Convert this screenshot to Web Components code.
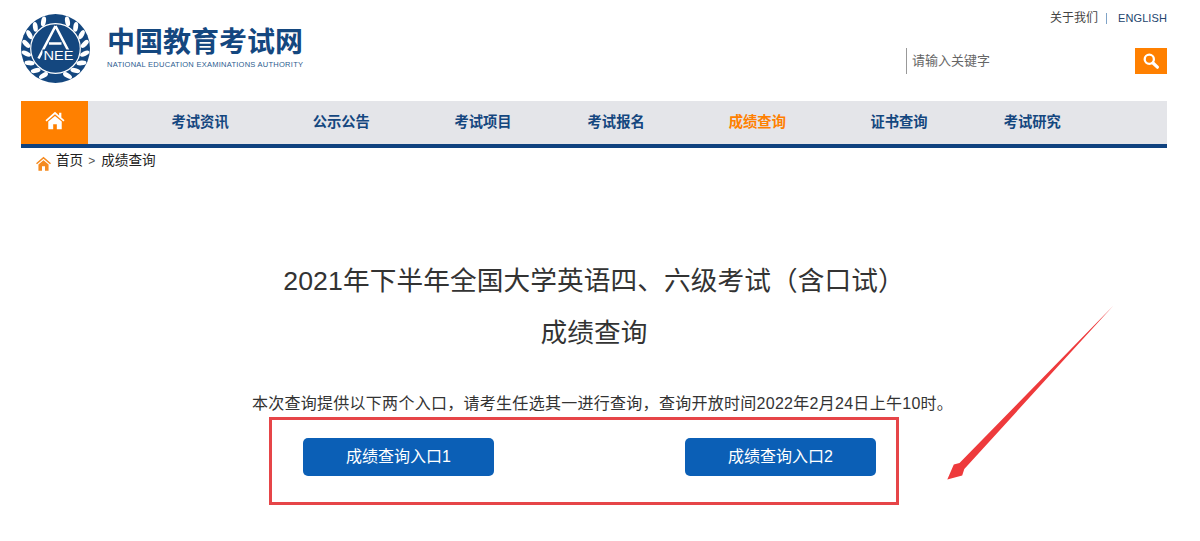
<!DOCTYPE html>
<html lang="zh-CN">
<head>
<meta charset="utf-8">
<title>成绩查询</title>
<style>
html,body{margin:0;padding:0;background:#fff;}
body{font-family:"Liberation Sans","Noto Sans CJK SC",sans-serif;color:#333;}
</style>
</head>
<body>
<neea-page>
  <neea-header></neea-header>
  <neea-nav></neea-nav>
  <neea-crumbs></neea-crumbs>
  <neea-notice>
    <span slot="t1">2021年下半年全国大学英语四、六级考试（含口试）</span>
    <span slot="t2">成绩查询</span>
    <span slot="desc">本次查询提供以下两个入口，请考生任选其一进行查询，查询开放时间2022年2月24日上午10时。</span>
    <neea-button slot="btns">成绩查询入口1</neea-button>
    <neea-button slot="btns">成绩查询入口2</neea-button>
  </neea-notice>
</neea-page>
<script>
const FONT='"Liberation Sans","Noto Sans CJK SC",sans-serif';
function leaves(){
  let s='';
  for(const a of [-66,-47,-28,-9,10,29,48,66]){
    for(const side of [1,-1]){
      const ang=a*Math.PI/180;
      const x=side*29.6*Math.cos(ang), y=29.6*Math.sin(ang);
      const rot=side*(a+55);
      s+=`<ellipse cx="${x.toFixed(1)}" cy="${y.toFixed(1)}" rx="2.4" ry="5" fill="#fff" transform="rotate(${rot} ${x.toFixed(1)} ${y.toFixed(1)})"/>`;
    }
  }
  return s;
}
class Base extends HTMLElement{
  constructor(){super();this.attachShadow({mode:'open'}).innerHTML=this.markup();}
}
customElements.define('neea-page',class extends Base{
  markup(){return `<style>
    :host{display:block;width:1200px;height:541px;position:relative;overflow:hidden;background:#fff;font-family:${FONT};}
    .wrap{padding:0 33px 0 21px;}
    svg{position:absolute;left:940px;top:300px;}
  </style>
  <div class="wrap"><slot></slot></div>
  <svg width="180" height="185" viewBox="940 300 180 185" aria-hidden="true">
    <polygon fill="#ee3a3c" points="1113.5,305.5 959.5,463 953.8,464.5 947.3,479.5 962.2,475.5 964.3,469"/>
  </svg>`;}
});
customElements.define('neea-header',class extends Base{
  markup(){return `<style>
    :host{display:flex;justify-content:space-between;height:101px;box-sizing:border-box;}
    .brand{display:flex;gap:17px;padding-top:14px;}
    .logo{display:block;width:69px;height:69px;}
    .names{display:flex;flex-direction:column;padding-top:14px;}
    .cn{font-size:28px;line-height:29px;font-weight:700;color:#14477f;width:196px;white-space:nowrap;}
    .en{font-size:7.5px;line-height:9px;margin-top:3px;color:#2b5c8f;white-space:nowrap;letter-spacing:.26px;}
    .side{display:flex;flex-direction:column;align-items:flex-end;}
    .links{display:flex;align-items:center;height:14px;margin-top:11px;font-size:12px;line-height:14px;color:#444;}
    .sep{width:1px;height:11px;background:#7fa3c7;margin:0 11px 0 8px;}
    .en2{color:#24456e;font-size:11px;letter-spacing:.1px;}
    .search{display:flex;width:261px;height:26px;margin-top:23px;box-sizing:border-box;border-left:1px solid #999;justify-content:space-between;}
    .ph{font-size:13px;line-height:26px;color:#666;padding-left:5px;}
    .go{width:32px;height:26px;background:#ff8000;display:flex;align-items:center;justify-content:center;}
  </style>
  <div class="brand">
    <svg class="logo" viewBox="-34.5 -34.5 69 69" role="img" aria-label="NEEA">
      <circle r="34.5" fill="#14477f"/>
      <circle r="24.8" fill="none" stroke="#fff" stroke-width="1.2"/>
      ${leaves()}
      <path d="M0-22.5 L-17 10 M0-22.5 L13 2.5 M-6.6 -5 L6 -5" stroke="#fff" stroke-width="2.6" fill="none"/>
      <rect x="-13" y="1" width="32" height="11" fill="#14477f"/>
      <text x="-12" y="11" font-family="Liberation Sans,sans-serif" font-size="13" fill="#fff" textLength="30" lengthAdjust="spacingAndGlyphs">NEE</text>
    </svg>
    <div class="names">
      <div class="cn">中国教育考试网</div>
      <div class="en">NATIONAL EDUCATION EXAMINATIONS AUTHORITY</div>
    </div>
  </div>
  <div class="side">
    <div class="links"><span>关于我们</span><span class="sep"></span><span class="en2">ENGLISH</span></div>
    <div class="search"><span class="ph">请输入关键字</span>
      <span class="go"><svg width="18" height="18" viewBox="0 0 18 18" aria-hidden="true"><circle cx="7.3" cy="7.3" r="4.6" fill="none" stroke="#fff" stroke-width="2.3"/><path d="M11 11 L15.4 15.2" stroke="#fff" stroke-width="3.2" stroke-linecap="round"/></svg></span>
    </div>
  </div>`;}
});
customElements.define('neea-nav',class extends Base{
  markup(){
    const items=[['考试资讯',83.5],['公示公告',84],['考试项目',84.5],['考试报名',76],['成绩查询',84],['证书查询',84.5],['考试研究',76]];
    return `<style>
    :host{display:flex;height:47px;box-sizing:border-box;background:#e4e5e9;border-bottom:4px solid #0f427f;}
    .home{width:67px;height:43px;background:#ff8000;display:flex;align-items:center;justify-content:center;padding-bottom:4px;box-sizing:border-box;}
    a{font-size:14.3px;line-height:43px;font-weight:700;color:#14477f;text-decoration:none;white-space:nowrap;}
    a.on{color:#ff8000;}
  </style>
  <div class="home"><svg width="20" height="19" viewBox="0 0 22 20" aria-hidden="true"><path fill="#fff" d="M11 0.5 L15.5 4.4 V1.5 H18 V6.6 L21.5 9.7 L20.2 11 L11 3.2 L1.8 11 L0.5 9.7 Z M3.6 11.2 L11 5 L18.4 11.2 V19.5 H13 V14 H9 V19.5 H3.6 Z"/></svg></div>
  ${items.map(([t,m],i)=>`<a href="#" class="${i==4?'on':''}" style="margin-left:${m}px">${t}</a>`).join('')}`;}
});
customElements.define('neea-crumbs',class extends Base{
  markup(){return `<style>
    :host{display:flex;align-items:center;height:28px;padding:0 0 2px 15px;box-sizing:border-box;font-size:13.6px;color:#222;}
    svg{display:block;margin-right:5px;margin-top:4px;}
    .gt{margin:0 6px 0 5px;font-size:12px;color:#555;}
    span{line-height:26px;}
  </style>
  <svg width="15" height="15" viewBox="0 0 16 16" aria-hidden="true"><path fill="#f58a1f" d="M8 0.8 L16 7.6 L14.9 8.8 L8 3 L1.1 8.8 L0 7.6 Z M2.6 9 L8 4.6 L13.4 9 V15.6 H9.6 V11 H6.4 V15.6 H2.6 Z"/></svg>
  <span>首页</span><span class="gt">&gt;</span><span>成绩查询</span>`;}
});
customElements.define('neea-notice',class extends Base{
  markup(){return `<style>
    :host{display:flex;flex-direction:column;align-items:center;padding-top:79px;color:#333;}
    h1{margin:0;font-weight:400;font-size:26.67px;line-height:52px;text-align:center;white-space:nowrap;letter-spacing:.1px;}
    p{margin:33px 0 0 17px;font-size:16px;line-height:24px;white-space:nowrap;letter-spacing:.28px;}
    .box{box-sizing:border-box;width:630px;height:88px;margin:1px 20px 0 0;border:3px solid #e64548;padding:18px 20px 0 31px;display:flex;justify-content:space-between;align-items:flex-start;}
  </style>
  <h1><slot name="t1"></slot></h1>
  <h1><slot name="t2"></slot></h1>
  <p><slot name="desc"></slot></p>
  <div class="box"><slot name="btns"></slot></div>`;}
});
customElements.define('neea-button',class extends Base{
  markup(){return `<style>
    :host{display:block;width:191px;height:38px;background:#0b5fb6;border-radius:5px;color:#fff;font-size:16px;line-height:38px;text-align:center;cursor:pointer;}
  </style><slot></slot>`;}
});
</script>
</body>
</html>
